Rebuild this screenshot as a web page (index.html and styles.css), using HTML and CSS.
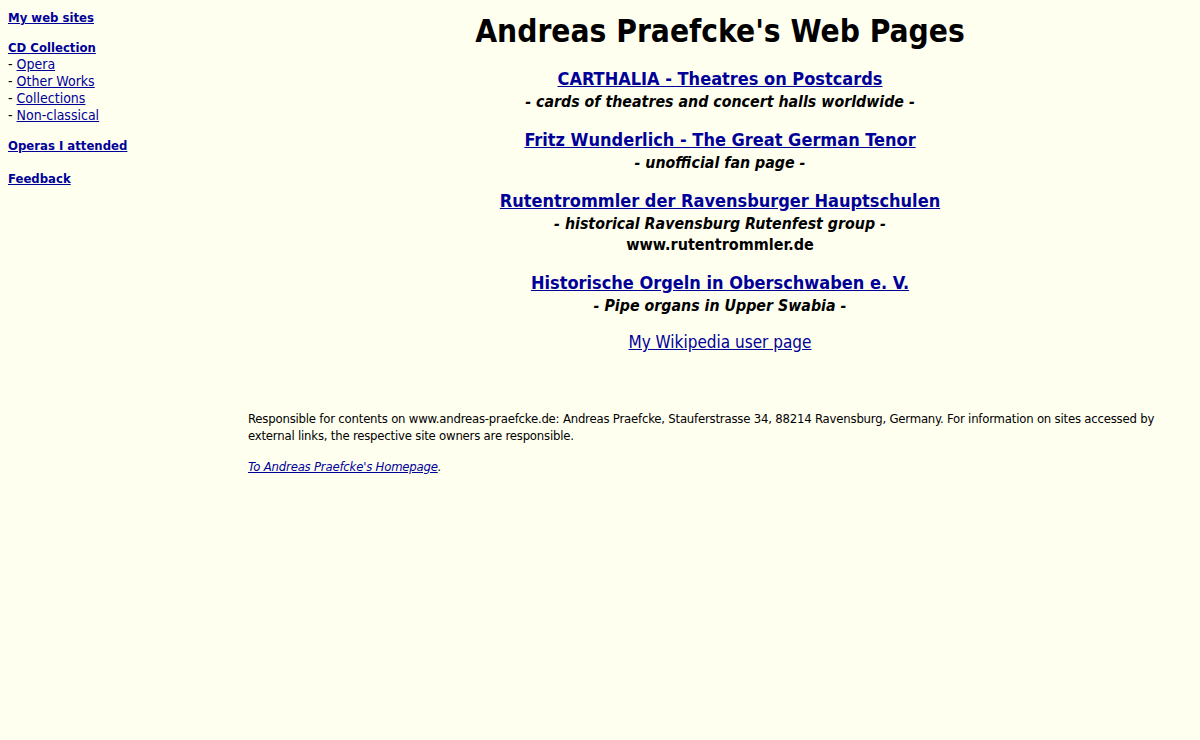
FILE: index.html
```html
<!DOCTYPE html>
<html lang="en">
<head>
<meta charset="utf-8">
<title>Andreas Praefcke's Web Pages</title>
<link rel="stylesheet" href="styles.css">
</head>
<body>
<div class="page">
  <nav class="side">
    <p class="grp g1"><a href="#" class="b">My web sites</a></p>
    <p class="grp g2"><a href="#" class="b">CD Collection</a><br>
      <span class="item">- <a href="#">Opera</a></span><br>
      <span class="item">- <a href="#">Other Works</a></span><br>
      <span class="item">- <a href="#">Collections</a></span><br>
      <span class="item">- <a href="#">Non-classical</a></span></p>
    <p class="grp g3"><a href="#" class="b">Operas I attended</a></p>
    <p class="grp g4"><a href="#" class="b">Feedback</a></p>
  </nav>
  <main class="main">
    <h1 class="title">Andreas Praefcke's Web Pages</h1>
    <div class="site">
      <a href="#" class="site-link">CARTHALIA - Theatres on Postcards</a>
      <div class="sub">- cards of theatres and concert halls worldwide -</div>
    </div>
    <div class="site">
      <a href="#" class="site-link">Fritz Wunderlich - The Great German Tenor</a>
      <div class="sub">- unofficial fan page -</div>
    </div>
    <div class="site">
      <a href="#" class="site-link">Rutentrommler der Ravensburger Hauptschulen</a>
      <div class="sub">- historical Ravensburg Rutenfest group -</div>
      <div class="url">www.rutentrommler.de</div>
    </div>
    <div class="site s4">
      <a href="#" class="site-link">Historische Orgeln in Oberschwaben e. V.</a>
      <div class="sub">- Pipe organs in Upper Swabia -</div>
    </div>
    <div class="site">
      <a href="#" class="wiki">My Wikipedia user page</a>
    </div>
    <footer class="foot">
      <p class="resp">Responsible for contents on www.andreas-praefcke.de: Andreas Praefcke, Stauferstrasse 34, 88214 Ravensburg, Germany. For information on sites accessed by external links, the respective site owners are responsible.</p>
      <p class="home"><a href="#">To Andreas Praefcke's Homepage</a>.</p>
    </footer>
  </main>
</div>
</body>
</html>
```

FILE: styles.css
```css
html, body {
  margin: 0;
  padding: 0;
  background: #fffff0;
}
body {
  font-family: "DejaVu Sans Condensed", "DejaVu Sans", sans-serif;
  color: #000;
  padding: 8px;
}
a { color: #000099; }
.page {
  display: grid;
  grid-template-columns: 240px 1fr;
}
.side {
  font-size: 13px;
  line-height: 17px;
}
.item { font-size: 14px; }
.grp { margin: 0; }
.g1 { margin-top: 1px; }
.g2 { margin-top: 13px; }
.g3 { margin-top: 13px; }
.g4 { margin-top: 16px; }
.b { font-weight: bold; }
.main {
  text-align: center;
}
.title {
  font-size: 31.4px;
  line-height: 38px;
  margin: 4px 0 17px;
  font-weight: bold;
}
.site {
  margin-bottom: 16px;
}
.s4 { margin-bottom: 15px; }
.site-link {
  font-size: 18px;
  line-height: 23px;
  font-weight: bold;
  display: inline-block;
}
.sub {
  font-size: 15.8px;
  line-height: 21px;
  padding-top: 1px;
  font-weight: bold;
  font-style: italic;
}
.url {
  font-size: 16px;
  line-height: 21px;
  font-weight: bold;
}
.wiki {
  font-size: 17px;
  line-height: 22px;
}
.foot {
  text-align: left;
  font-size: 13px;
  line-height: 17px;
  letter-spacing: -0.2px;
  margin-top: 57px;
}
.foot p { margin: 0; }
.home {
  margin-top: 14px !important;
  font-style: italic;
}
```
